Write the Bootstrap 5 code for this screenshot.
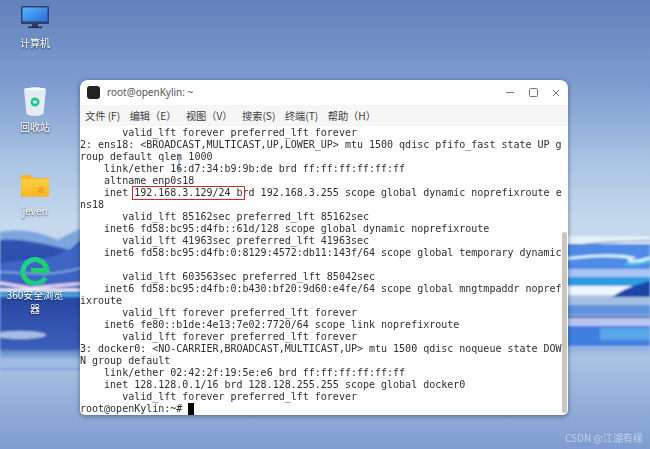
<!DOCTYPE html>
<html lang="zh">
<head>
<meta charset="utf-8">
<title>openKylin</title>
<link href="https://cdn.jsdelivr.net/npm/bootstrap@5.3.0/dist/css/bootstrap.min.css" rel="stylesheet">
<style>
html,body{width:650px;height:449px;overflow:hidden;margin:0}
.desk{position:relative;width:650px;height:449px;overflow:hidden;background:linear-gradient(180deg,#6281bc 0,#7f9fd2 90px,#a9c3e3 160px,#c6d9ee 225px,#a9c2e2 360px,#7d9cd0 449px)}
.wall{position:absolute;left:0;top:0;width:650px;height:449px}
.dicon{position:absolute;left:5px;width:60px;text-align:center;color:#fff;font:10px/14px "Noto Sans CJK SC","Liberation Sans",sans-serif;text-shadow:0 1px 2px rgba(0,0,0,.75);filter:blur(.4px)}
.dicon svg{display:block;margin:0 auto}
.dl{display:block}
.di1{top:5px}.di1 .dl{margin-top:7px}
.di2{top:87px}.di2 .dl{margin-top:3px}
.di3{top:174px}.di3 .dl{margin-top:7px}
.di4{top:253px}.di4 .dl{margin-top:3px}
.win{position:absolute;left:80px;top:80px;width:488px;height:335px;background:#fff;border-radius:8px 8px 5px 5px;box-shadow:0 1px 5px rgba(20,30,60,.5);overflow:hidden}
.tbar{height:25px;padding:0 8px 0 7px;color:#555;font:10px/25px "Noto Sans","Liberation Sans",sans-serif}
.tlogo{width:13px;height:13px;border-radius:3px;background:#222;margin-right:7px}
.ctl{display:block;margin-left:14px}
.mbar{height:21px;padding-left:5px;background:#f6f6f6;color:#3c3c3c;font:10.2px/21px "Noto Sans CJK SC","Liberation Sans",sans-serif;gap:9.5px;white-space:nowrap}
.term{position:relative;height:289px}
.tout{margin:0;padding:1px 0 0;overflow:hidden;color:#2e2e2e;font:10px/12px "DejaVu Sans Mono",monospace;filter:blur(.35px);white-space:pre}
.redmark{position:relative}
.redmark::after{content:"";position:absolute;left:-2px;right:-2px;top:-1px;bottom:-2px;border:1.5px solid #d2262b}
.curs{display:inline-block;width:6px;height:12px;background:#000;vertical-align:top}
.sbar{position:absolute;right:1px;top:106px;width:5px;height:181px;background:#c9c6c1;border-radius:3px}
.ibeam{position:absolute;left:96px;top:29px}
.mark-csdn{position:absolute;left:565px;top:431px;color:rgba(255,255,255,.5);font:10px/14px "Noto Sans CJK SC","Liberation Sans",sans-serif;filter:blur(.4px);white-space:nowrap}
</style>
</head>
<body>
<div class="desk">
  <svg class="wall" viewBox="0 0 650 449" aria-hidden="true">
    <defs>
      <linearGradient id="dk" x1="0" y1="0" x2="0" y2="1"><stop offset="0" stop-color="#2f55b4"/><stop offset="1" stop-color="#243f98"/></linearGradient>
      <linearGradient id="fade" x1="0" y1="0" x2="0" y2="1"><stop offset="0" stop-color="#2a47a3"/><stop offset=".8" stop-color="#3a5fb8"/><stop offset="1" stop-color="#9db9de" stop-opacity="0"/></linearGradient>
      <filter id="b1"><feGaussianBlur stdDeviation="1"/></filter>
      <filter id="b2"><feGaussianBlur stdDeviation="2.5"/></filter>
    </defs>
    <g filter="url(#b1)">
      <path d="M0 232C20 228 40 232 58 240C72 232 85 226 100 224V370H0Z" fill="#7ea6de"/>
      <path d="M0 240C20 238 40 243 70 250C80 240 90 232 100 230V350H0Z" fill="url(#dk)"/>
      <path d="M0 264C20 258 50 262 62 252C75 248 90 240 100 236V300H0Z" fill="#3e66c4"/>
      <path d="M0 272C30 272 50 280 100 262" fill="none" stroke="#8bb0ea" stroke-width="1.5"/>
      <path d="M0 283L30 288L100 282" fill="none" stroke="#ead6ee" stroke-width="3"/>
      <path d="M0 290H100" stroke="#f2f6fb" stroke-width="3"/>
      <path d="M0 295H100" stroke="#39c3ea" stroke-width="2"/>
      <rect x="0" y="298" width="100" height="62" fill="url(#fade)"/>
      <ellipse cx="20" cy="335" rx="26" ry="4" fill="#a7bde6"/>
      <rect x="0" y="358" width="100" height="10" fill="#a9c2e2" opacity=".8"/>
    </g>
    <g filter="url(#b1)">
      <rect x="560" y="236" width="90" height="10" fill="#e5eff8"/>
      <rect x="560" y="244" width="90" height="28" fill="#4f8be6"/>
      <path d="M560 247C590 243 620 241 650 241" fill="none" stroke="#4a6fb4" stroke-width="1.2"/>
      <path d="M560 259C590 256 615 254 632 258C622 263 640 262 650 258" fill="none" stroke="#d9f3fd" stroke-width="3"/>
      <path d="M625 264C635 266 645 263 650 260" fill="none" stroke="#42c4ee" stroke-width="2.5"/>
      <rect x="560" y="269" width="90" height="8" fill="#a7c5f3"/>
      <rect x="560" y="277" width="90" height="9" fill="#2f9be2"/>
      <rect x="560" y="286" width="90" height="9" fill="#eef7fb"/>
      <path d="M620 292C630 286 640 284 650 281V298H610Z" fill="#1f45a8"/>
      <rect x="560" y="297" width="90" height="20" fill="#a3bfe2"/>
      <rect x="560" y="305" width="90" height="10" fill="#5e93df"/>
      <rect x="560" y="316" width="90" height="2" fill="#3f64ae"/>
      <rect x="560" y="318" width="90" height="8" fill="#b8c6ef"/>
      <rect x="560" y="326" width="90" height="20" fill="#3f7fe0"/>
      <rect x="600" y="328" width="50" height="12" fill="#5fb0e8" opacity=".8"/>
      <rect x="560" y="346" width="90" height="9" fill="#95b4e3"/>
    </g>
    <rect x="560" y="352" width="90" height="6" fill="#a9c2e2" filter="url(#b2)"/>
  </svg>

  <div class="dicon di1">
    <svg width="30" height="24" viewBox="0 0 30 24"><defs><linearGradient id="scr" x1="0" y1="0" x2="1" y2="1"><stop offset="0" stop-color="#55b6f8"/><stop offset="1" stop-color="#2a6ce0"/></linearGradient></defs><rect x="1" y="1" width="28" height="18" rx="1.5" fill="#2f4068"/><rect x="2.5" y="2.5" width="25" height="14" fill="url(#scr)"/><rect x="12" y="19" width="6" height="3" fill="#2f3c5c"/><rect x="8" y="21.500" width="14" height="1.600" fill="#28314c"/></svg>
    <span class="dl">计算机</span>
  </div>
  <div class="dicon di2">
    <svg width="24" height="30" viewBox="0 0 24 30"><path d="M1 2C7 0 17 0 23 2L20.500 27C17 29.500 7 29.500 3.500 27Z" fill="#e4ecf2"/><path d="M1 2C7 0 17 0 23 2C17 4 7 4 1 2Z" fill="#f8fbfc"/><circle cx="12" cy="15" r="4.500" fill="#22c38c"/><rect x="10" y="13.500" width="4" height="3" rx="1" fill="#d7f5ea"/></svg>
    <span class="dl">回收站</span>
  </div>
  <div class="dicon di3">
    <svg width="30" height="23" viewBox="0 0 30 23"><defs><linearGradient id="fo" x1="0" y1="0" x2="0" y2="1"><stop offset="0" stop-color="#fdd046"/><stop offset="1" stop-color="#fbb322"/></linearGradient></defs><path d="M1 3C1 1.500 2 1 3 1H11L14 4H29V21C29 22 28.500 22.500 27 22.500H3C2 22.500 1 22 1 21Z" fill="#f7b62b"/><rect x="1" y="5" width="28" height="17.500" rx="1.500" fill="url(#fo)"/><path d="M21 12L25 15.500H23.800V19H18.200V15.500H17Z" fill="#f2a226"/></svg>
    <span class="dl">jeven</span>
  </div>
  <div class="dicon di4">
    <svg width="30" height="32" viewBox="0 0 30 32"><defs><linearGradient id="eg" x1="0" y1="0" x2="1" y2="1"><stop offset="0" stop-color="#1fd0a0"/><stop offset=".5" stop-color="#1ed06a"/><stop offset="1" stop-color="#14c79a"/></linearGradient></defs><path d="M25.500 24.500A12 12 0 1 1 27 17.500H11" fill="none" stroke="url(#eg)" stroke-width="5"/></svg>
    <span class="dl">360安全浏览器</span>
  </div>

  <div class="win d-flex flex-column">
    <div class="tbar d-flex align-items-center">
      <span class="tlogo"></span>
      <span class="flex-grow-1">root@openKylin: ~</span>
      <svg class="ctl" width="9" height="9" viewBox="0 0 9 9"><path d="M0 4.500H8" stroke="#777" stroke-width="1"/></svg>
      <svg class="ctl" width="9" height="9" viewBox="0 0 9 9"><rect x=".5" y=".5" width="8" height="8" rx="1" fill="none" stroke="#777"/></svg>
      <svg class="ctl" width="8" height="8" viewBox="0 0 8 8"><path d="M1 1L7 7M7 1L1 7" stroke="#777" stroke-width="1"/></svg>
    </div>
    <div class="mbar d-flex">
      <span>文件 (F)</span><span>编辑（E）</span><span>视图（V）</span><span>搜索(S)</span><span>终端(T)</span><span>帮助（H）</span>
    </div>
    <div class="term">
<pre class="tout">       valid_lft forever preferred_lft forever
2: ens18: &lt;BROADCAST,MULTICAST,UP,LOWER_UP&gt; mtu 1500 qdisc pfifo_fast state UP g
roup default qlen 1000
    link/ether 16:d7:34:b9:9b:de brd ff:ff:ff:ff:ff:ff
    altname enp0s18
    inet <span class="redmark">192.168.3.129/24 b</span>rd 192.168.3.255 scope global dynamic noprefixroute e
ns18
       valid_lft 85162sec preferred_lft 85162sec
    inet6 fd58:bc95:d4fb::61d/128 scope global dynamic noprefixroute
       valid_lft 41963sec preferred_lft 41963sec
    inet6 fd58:bc95:d4fb:0:8129:4572:db11:143f/64 scope global temporary dynamic

       valid_lft 603563sec preferred_lft 85042sec
    inet6 fd58:bc95:d4fb:0:b430:bf20:9d60:e4fe/64 scope global mngtmpaddr nopref
ixroute
       valid_lft forever preferred_lft forever
    inet6 fe80::b1de:4e13:7e02:7720/64 scope link noprefixroute
       valid_lft forever preferred_lft forever
3: docker0: &lt;NO-CARRIER,BROADCAST,MULTICAST,UP&gt; mtu 1500 qdisc noqueue state DOW
N group default
    link/ether 02:42:2f:19:5e:e6 brd ff:ff:ff:ff:ff:ff
    inet 128.128.0.1/16 brd 128.128.255.255 scope global docker0
       valid_lft forever preferred_lft forever
root@openKylin:~# <span class="curs"></span></pre>
      <svg class="ibeam" width="6" height="15" viewBox="0 0 6 15"><path d="M1 .5H5M3 .5V14.500M1 14.500H5" fill="none" stroke="#5a7fb0" stroke-width="1"/></svg>
      <div class="sbar"></div>
    </div>
  </div>
  <div class="mark-csdn">CSDN @江湖有缘</div>
</div>
<script src="https://cdn.jsdelivr.net/npm/bootstrap@5.3.0/dist/js/bootstrap.bundle.min.js"></script>
</body>
</html>
